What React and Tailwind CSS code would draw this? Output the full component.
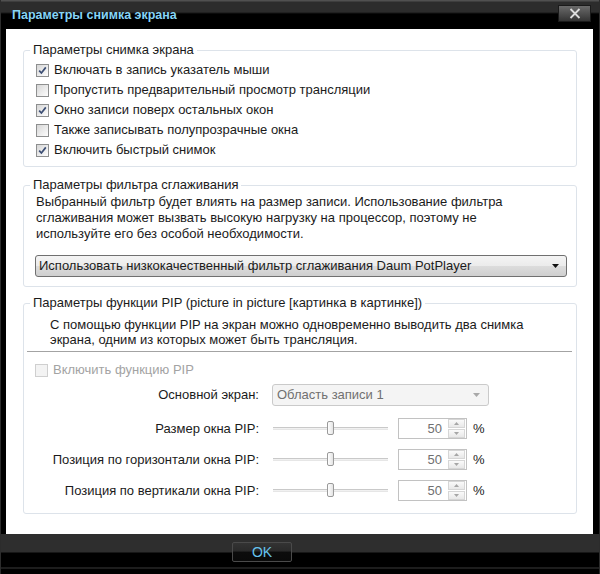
import React from "react";

const font = "font-['Liberation_Sans',Arial,sans-serif]";

function Check({ checked, disabled }) {
  return (
    <span
      className={`w-[13px] h-[13px] shrink-0 border flex items-center justify-center ${
        disabled
          ? "border-[#cfcfcf] bg-[#f3f3f3]"
          : "border-[#8e8f8f] bg-[linear-gradient(135deg,#d6d6d6,#fdfdfd)]"
      }`}
    >
      {checked && (
        <svg width="9" height="9" viewBox="0 0 9 9">
          <path d="M1.2 4.6 L3.4 7 L7.8 1.4" stroke="#3b4d73" strokeWidth="1.7" fill="none" />
        </svg>
      )}
    </span>
  );
}

function CheckRow({ checked, children }) {
  return (
    <div className="h-5 flex items-center gap-[5px]">
      <Check checked={checked} />
      <span>{children}</span>
    </div>
  );
}

function Group({ title, children, className = "" }) {
  return (
    <fieldset className={`border border-[#dde3ea] rounded-[3px] ${className}`}>
      <legend className="ml-[6px] px-[3px] leading-4">{title}</legend>
      {children}
    </fieldset>
  );
}

function Slider() {
  return (
    <div className="relative w-[115px] h-[21px] flex items-center">
      <div className="w-full h-[3px] border-t border-[#c9c9c9] bg-[#f1f1f1] border-b border-b-[#e6e6e6]" />
      {/* thumb */}
      <div className="absolute left-[54px] top-[3px] w-[7px] h-[14px] rounded-[2px] border border-[#9a9a9a] bg-[linear-gradient(to_right,#ffffff,#e4e4e4)]" />
    </div>
  );
}

function Spin({ value }) {
  return (
    <div className="w-[69px] h-[21px] border border-[#c2c2c2] bg-white flex items-center">
      <span className="flex-1 text-right pr-[6px] text-[#707070]">{value}</span>
      <div className="w-[17px] h-[19px] mr-[1px] flex flex-col gap-px">
        <div className="flex-1 border border-[#d6d6d6] bg-[linear-gradient(#fafafa,#e8e8e8)] flex items-center justify-center">
          <svg width="5" height="3" viewBox="0 0 5 3"><path d="M0 3 L2.5 0 L5 3 Z" fill="#a6a6a6" /></svg>
        </div>
        <div className="flex-1 border border-[#d6d6d6] bg-[linear-gradient(#fafafa,#e8e8e8)] flex items-center justify-center">
          <svg width="5" height="3" viewBox="0 0 5 3"><path d="M0 0 L2.5 3 L5 0 Z" fill="#a6a6a6" /></svg>
        </div>
      </div>
    </div>
  );
}

function PipRow({ label }) {
  return (
    <div className="h-[21px] flex items-center">
      <span className="w-[235px] text-right">{label}</span>
      <div className="ml-[14px]">
        <Slider />
      </div>
      <div className="ml-[10px]">
        <Spin value="50" />
      </div>
      <span className="ml-[6px]">%</span>
    </div>
  );
}

export default function App() {
  return (
    <div className={`w-[600px] h-[574px] bg-black flex flex-col ${font} text-[13px] text-[#1b1b1b] border-l border-r border-[#2c2c2c]`}>
      {/* title bar */}
      <div className="h-[29px] flex items-start bg-[linear-gradient(to_bottom,#505050_0px,#505050_1px,#2c2c2c_2px,#2c2c2c_12px,#000_14px)]">
        <span className="ml-[11px] mt-[7px] font-bold text-[12.5px] leading-4 text-[#86d4f6]">
          Параметры снимка экрана
        </span>
        <button className="ml-auto mr-[8px] mt-[5px] w-[33px] h-[17px] border border-[#1a1a1a] bg-[linear-gradient(to_bottom,#6a6a6a,#4a4a4a_60%,#333)] flex items-center justify-center">
          <svg width="12" height="11" viewBox="0 0 12 11">
            <path d="M1.5 1 L10.5 10 M10.5 1 L1.5 10" stroke="#dcdcdc" strokeWidth="1.8" />
          </svg>
        </button>
      </div>

      {/* client area */}
      <div className="h-[505px] ml-[5px] mr-[6px] bg-white pl-[17px] pr-[16px] pt-[13px]">
        <Group title="Параметры снимка экрана">
          <div className="pl-[12px] pt-[2px] pb-[6px]">
            <CheckRow checked>Включать в запись указатель мыши</CheckRow>
            <CheckRow>Пропустить предварительный просмотр трансляции</CheckRow>
            <CheckRow checked>Окно записи поверх остальных окон</CheckRow>
            <CheckRow>Также записывать полупрозрачные окна</CheckRow>
            <CheckRow checked>Включить быстрый снимок</CheckRow>
          </div>
        </Group>

        <Group title="Параметры фильтра сглаживания" className="mt-[10px]">
          <div className="pl-[11px] pt-[1px] pb-[9px]">
            <p className="pl-[1px] leading-4">
              Выбранный фильтр будет влиять на размер записи. Использование фильтра
              <br />
              сглаживания может вызвать высокую нагрузку на процессор, поэтому не
              <br />
              используйте его без особой необходимости.
            </p>
            <div className="mt-[13px] w-[532px] h-[22px] border border-[#707070] rounded-[3px] bg-[linear-gradient(to_bottom,#f4f4f4_0%,#ebebeb_50%,#dcdcdc_51%,#cfcfcf_100%)] flex items-center pl-[3px] pr-[7px]">
              <span className="flex-1">Использовать низкокачественный фильтр сглаживания Daum PotPlayer</span>
              <svg width="7" height="4" viewBox="0 0 7 4"><path d="M0 0 L7 0 L3.5 4 Z" fill="#111" /></svg>
            </div>
          </div>
        </Group>

        <Group title="Параметры функции PIP (picture in picture [картинка в картинке])" className="mt-[8px]">
          <div className="pt-[6px] pb-[12px]">
            <p className="pl-[26px] leading-[15px]">
              С помощью функции PIP на экран можно одновременно выводить два снимка
              <br />
              экрана, одним из которых может быть трансляция.
            </p>
            <div className="mt-[4px] ml-[3px] mr-[4px] h-px bg-[#a3a3a3]" />
            <div className="mt-[8px] pl-[11px] h-5 flex items-center gap-[5px] text-[#a3a3a3]">
              <Check disabled />
              <span>Включить функцию PIP</span>
            </div>
            <div className="mt-[4px] h-[22px] flex items-center">
              <span className="w-[235px] text-right">Основной экран:</span>
              <div className="ml-[13px] w-[217px] h-[22px] border border-[#cacaca] rounded-[3px] bg-[#f4f4f4] flex items-center pl-[4px] pr-[8px] text-[#707070]">
                <span className="flex-1">Область записи 1</span>
                <svg width="7" height="4" viewBox="0 0 7 4"><path d="M0 0 L7 0 L3.5 4 Z" fill="#a8a8a8" /></svg>
              </div>
            </div>
            <div className="mt-[12px] flex flex-col gap-[10px]">
              <PipRow label="Размер окна PIP:" />
              <PipRow label="Позиция по горизонтали окна PIP:" />
              <PipRow label="Позиция по вертикали окна PIP:" />
            </div>
          </div>
        </Group>
      </div>

      {/* bottom bar */}
      <div className="h-[40px] bg-[linear-gradient(to_bottom,#2e2e2e_0px,#2e2e2e_18px,#000_19px,#000_33px,#3a3a3a_34px,#000_35px)] pt-[8px]">
        <button className="ml-[231px] w-[60px] h-[20px] border border-[#4a4a4a] rounded-[2px] bg-[linear-gradient(to_bottom,#333_0%,#2a2a2a_45%,#0c0c0c_50%,#0a0a0a_100%)] text-[#66c3ee] text-[14px] leading-none flex items-center justify-center">
          OK
        </button>
      </div>
    </div>
  );
}
